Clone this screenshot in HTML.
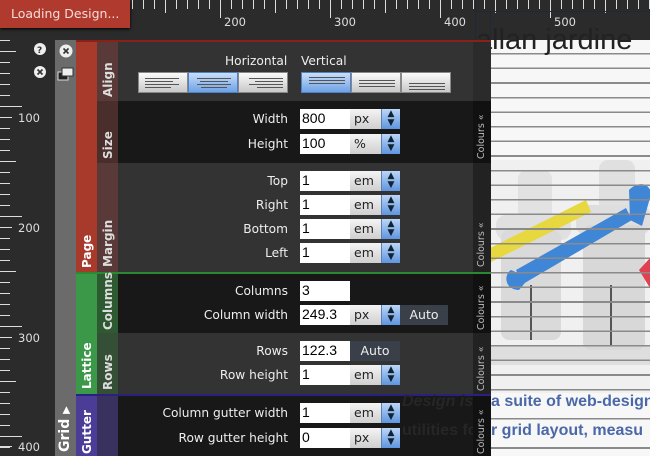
<!DOCTYPE html>
<html><head><meta charset="utf-8"><style>
*{margin:0;padding:0;box-sizing:border-box}
body{width:650px;height:456px;overflow:hidden;background:#2b2b2b;position:relative;font-family:"DejaVu Sans","Liberation Sans",sans-serif;font-size:12.2px;color:#eee}
.abs{position:absolute}
.lbl{position:absolute;right:362px;text-align:right;white-space:nowrap;color:#eee;font-size:12.2px}
.inp{position:absolute;left:300px;width:50px;height:20px;background:#fff;color:#000;font-family:"Liberation Sans",sans-serif;font-size:14px;padding:1px 2px;line-height:17px}
.sel{position:absolute;left:350px;width:50px;height:20px;background:linear-gradient(#f4f4f4,#cfcfcf);color:#222;font-size:12.5px;padding-left:4px;line-height:20px}
.sel b{position:absolute;right:0;top:0;width:19px;height:20px;background:linear-gradient(#bcd6f8,#5f95df);border-left:1px solid #5a7fb5;font-weight:normal;color:#123;font-size:9px;text-align:center;line-height:9px;padding-top:1px}
.btn{position:absolute;height:20px;background:#3a4049;color:#eee;font-size:12.5px;text-align:center;line-height:20px}
.vt{position:absolute;transform:rotate(-90deg);transform-origin:left top;white-space:nowrap;font-weight:bold;font-size:12px}
.col{position:absolute;left:473px;width:18px;background:#111}
.col span{position:absolute;transform:rotate(-90deg);transform-origin:left top;font-size:9.5px;color:#bbb;white-space:nowrap;left:3px}
.ab{position:absolute;top:72px;width:50px;height:21px;background:linear-gradient(#fafafa,#c8c8c8);border:1px solid #888}
.ab.on{background:linear-gradient(#c9def9,#6ea2e6);border-color:#4f7fc4}
.ab i{position:absolute;height:1px;background:#555}
</style></head><body>

<!-- top ruler -->
<svg class="abs" style="left:0;top:0" width="650" height="40">
<g stroke="#ddd" stroke-width="1">
<path d="M121.5 0v9M132.5 0v9M143.5 0v9M154.5 0v9M165.5 0v13M176.5 0v9M187.5 0v9M198.5 0v9M209.5 0v9M220.5 0v18M231.5 0v9M242.5 0v9M253.5 0v9M264.5 0v9M275.5 0v13M286.5 0v9M297.5 0v9M308.5 0v9M319.5 0v9M330.5 0v18M341.5 0v9M352.5 0v9M363.5 0v9M374.5 0v9M385.5 0v13M396.5 0v9M407.5 0v9M418.5 0v9M429.5 0v9M440.5 0v18M451.5 0v9M462.5 0v9M473.5 0v9M484.5 0v9M495.5 0v13M506.5 0v9M517.5 0v9M528.5 0v9M539.5 0v9M550.5 0v18M561.5 0v9M572.5 0v9M583.5 0v9M594.5 0v9M605.5 0v13M616.5 0v9M627.5 0v9M638.5 0v9M649.5 0v9"/>
</g>
<path d="M475.5 0v40M475 11.5h175M490.5 11v29" stroke="#1c2a38" stroke-width="1"/>
<g fill="#ddd" font-family="DejaVu Sans,sans-serif" font-size="11.5">
<text x="224" y="26">200</text><text x="334" y="26">300</text><text x="444" y="26">400</text><text x="554" y="26">500</text>
</g>
</svg>

<!-- left ruler -->
<svg class="abs" style="left:0;top:0" width="55" height="456">
<g stroke="#ddd"><path d="M0 40.5h10M0 51.5h16M0 62.5h10M0 73.5h10M0 84.5h10M0 95.5h10M0 106.5h22M0 117.5h10M0 128.5h10M0 139.5h10M0 150.5h10M0 161.5h16M0 172.5h10M0 183.5h10M0 194.5h10M0 205.5h10M0 216.5h22M0 227.5h10M0 238.5h10M0 249.5h10M0 260.5h10M0 271.5h16M0 282.5h10M0 293.5h10M0 304.5h10M0 315.5h10M0 326.5h22M0 337.5h10M0 348.5h10M0 359.5h10M0 370.5h10M0 381.5h16M0 392.5h10M0 403.5h10M0 414.5h10M0 425.5h10M0 436.5h22M0 447.5h10"/>
<path d="M0 117.5h12M0 227.5h12M0 337.5h12M0 446.5h12"/></g>
<g fill="#ddd" font-family="DejaVu Sans,sans-serif" font-size="11.5"><text x="18" y="122">100</text><text x="18" y="232">200</text><text x="18" y="342">300</text><text x="18" y="451">400</text></g>
<circle cx="40" cy="49" r="6" fill="#eee"/><text x="37" y="53" font-size="9" font-weight="bold" fill="#333">?</text>
<circle cx="40" cy="72" r="6" fill="#eee"/><path d="M37.5 69.5l5 5M42.5 69.5l-5 5" stroke="#333" stroke-width="1.6"/>
</svg>

<!-- loading -->
<div class="abs" style="left:0;top:0;width:130px;height:28px;background:#b13a2e;color:#f4dcd8;font-size:12.5px;line-height:27px;padding-left:11px;box-shadow:0 1px 3px #000">Loading Design...</div>

<!-- page content right -->
<div class="abs" style="left:491px;top:40px;width:159px;height:416px;background:#f7f7f7;overflow:hidden">
<svg width="159" height="416" style="position:absolute;left:0;top:0">
<rect x="0" y="120" width="159" height="240" fill="#f0f0f0"/>
<rect x="0" y="305" width="159" height="20" fill="#dedede"/>
<rect x="27" y="130" width="34" height="50" rx="9" fill="#e2e2e2"/>
<rect x="5" y="175" width="75" height="25" rx="10" fill="#e0e0e0"/>
<rect x="10" y="190" width="60" height="110" rx="8" fill="#dadada"/>
<path d="M40 245v55" stroke="#555" stroke-width="2"/>
<rect x="108" y="120" width="36" height="52" rx="9" fill="#e0e0e0"/>
<rect x="85" y="165" width="74" height="30" rx="10" fill="#dedede"/>
<rect x="92" y="185" width="62" height="125" rx="8" fill="#d8d8d8"/>
<path d="M120 245v60" stroke="#555" stroke-width="2"/>
<path d="M-5 210L95 160l5 12L0 222z" fill="#e8d840"/>
<path d="M25 230L135 168l6 12L32 244z" fill="#3f86d6"/>
<path d="M20 230c-8 5-6 20 8 20l10-12z" fill="#3f86d6"/>
<path d="M138 150c12-12 25-4 21 8l-8 28-12-6z" fill="#3f86d6"/>
<path d="M148 230l11-12v30z" fill="#e04050"/>
</svg>
<div style="position:absolute;left:0;top:0;width:159px;height:416px;background:repeating-linear-gradient(to bottom,transparent 0,transparent 13px,#8a8a8a 13px,#8a8a8a 14.6px)"></div>
</div>
<div class="abs" style="left:476px;top:24px;font-family:'Liberation Sans',sans-serif;font-size:29px;color:#222;white-space:nowrap">allan jardine</div>

<!-- gray Grid strip -->
<div class="abs" style="left:55px;top:40px;width:21px;height:416px;background:#6b6b6b"></div>
<svg class="abs" style="left:55px;top:42px" width="21" height="40"><circle cx="11" cy="9" r="6.5" fill="#eee"/><path d="M8.5 6.5l5 5M13.5 6.5l-5 5" stroke="#333" stroke-width="1.6"/>
<rect x="3" y="30" width="10" height="8" fill="#222" stroke="#ddd"/><rect x="7" y="26" width="11" height="8" fill="#eee" stroke="#333"/></svg>
<div class="vt" style="left:57px;top:452px;color:#fff;font-size:14px">Grid <span style="font-size:10px">▶</span></div>

<!-- main strips -->
<div class="abs" style="left:76px;top:40px;width:415px;height:2px;background:#8a2018"></div>
<div class="abs" style="left:76px;top:42px;width:21px;height:230px;background:#a83a2c"></div>
<div class="abs" style="left:76px;top:272px;width:415px;height:2px;background:#2a8a34"></div>
<div class="abs" style="left:76px;top:274px;width:21px;height:120px;background:#3a9848"></div>
<div class="abs" style="left:76px;top:394px;width:415px;height:2px;background:#2a2080"></div>
<div class="abs" style="left:76px;top:396px;width:21px;height:60px;background:#4b3c98"></div>
<div class="vt" style="left:80px;top:268px;color:#fff">Page</div>
<div class="vt" style="left:80px;top:389px;color:#fff">Lattice</div>
<div class="vt" style="left:80px;top:454px;color:#fff">Gutter</div>

<!-- sub strips -->
<div class="abs" style="left:97px;top:42px;width:21px;height:59px;background:#5a3a38"></div>
<div class="abs" style="left:97px;top:101px;width:21px;height:62px;background:#4a2e2c"></div>
<div class="abs" style="left:97px;top:163px;width:21px;height:109px;background:#5a3a38"></div>
<div class="abs" style="left:97px;top:274px;width:21px;height:59px;background:#2e5a32"></div>
<div class="abs" style="left:97px;top:333px;width:21px;height:61px;background:#354e36"></div>
<div class="abs" style="left:97px;top:396px;width:21px;height:60px;background:#39325e"></div>
<div class="vt" style="left:101px;top:97px;color:#ddd">Align</div>
<div class="vt" style="left:101px;top:159px;color:#ddd">Size</div>
<div class="vt" style="left:101px;top:267px;color:#ddd">Margin</div>
<div class="vt" style="left:101px;top:330px;color:#ddd">Columns</div>
<div class="vt" style="left:101px;top:390px;color:#ddd">Rows</div>

<!-- content bgs -->
<div class="abs" style="left:118px;top:42px;width:355px;height:59px;background:#333"></div>
<div class="abs" style="left:118px;top:101px;width:355px;height:62px;background:#181818"></div>
<div class="abs" style="left:118px;top:163px;width:355px;height:109px;background:#333"></div>
<div class="abs" style="left:118px;top:274px;width:355px;height:59px;background:#181818"></div>
<div class="abs" style="left:118px;top:333px;width:355px;height:61px;background:#333"></div>
<div class="abs" style="left:118px;top:396px;width:355px;height:60px;background:#181818"></div>

<!-- see-through text -->
<div class="abs" style="left:402px;top:393px;font-family:'Liberation Sans',sans-serif;font-weight:bold;font-size:16px;color:#262626;white-space:nowrap;font-style:italic">Design is a</div>
<div class="abs" style="left:402px;top:422px;font-family:'Liberation Sans',sans-serif;font-weight:bold;font-size:16px;color:#262626;white-space:nowrap">utilities fo</div>
<div class="abs" style="left:491px;top:393px;width:159px;overflow:hidden;font-family:'Liberation Sans',sans-serif;font-weight:bold;font-size:16px;color:#4a68a8;white-space:nowrap;background:#f7f7f7">a suite of web-design</div>
<div class="abs" style="left:491px;top:422px;width:159px;overflow:hidden;font-family:'Liberation Sans',sans-serif;font-weight:bold;font-size:16px;color:#4a68a8;white-space:nowrap;background:#f7f7f7">r grid layout, measu</div>

<!-- colours strips -->
<div class="col" style="top:42px;height:59px;background:#2b2b2b"></div>
<div class="col" style="top:101px;height:62px"><span style="top:58px">Colours «</span></div>
<div class="col" style="top:163px;height:109px;background:#222"><span style="top:104px">Colours «</span></div>
<div class="col" style="top:274px;height:59px"><span style="top:56px">Colours «</span></div>
<div class="col" style="top:333px;height:61px;background:#222"><span style="top:58px">Colours «</span></div>
<div class="col" style="top:396px;height:60px"><span style="top:58px">Colours «</span></div>

<!-- align -->
<div class="abs" style="left:225px;top:54px;color:#eee">Horizontal</div>
<div class="abs" style="left:301px;top:54px;color:#eee">Vertical</div>
<div class="ab" style="left:138px"><i style="left:6px;top:5px;width:34px"></i><i style="left:6px;top:8px;width:28px"></i><i style="left:6px;top:11px;width:34px"></i><i style="left:6px;top:14px;width:26px"></i></div>
<div class="ab on" style="left:188px"><i style="left:8px;top:5px;width:34px"></i><i style="left:11px;top:8px;width:28px"></i><i style="left:8px;top:11px;width:34px"></i><i style="left:12px;top:14px;width:26px"></i></div>
<div class="ab" style="left:238px"><i style="left:10px;top:5px;width:34px"></i><i style="left:16px;top:8px;width:28px"></i><i style="left:10px;top:11px;width:34px"></i><i style="left:18px;top:14px;width:26px"></i></div>
<div class="ab on" style="left:301px"><i style="left:7px;top:4px;width:36px"></i><i style="left:7px;top:7px;width:36px"></i><i style="left:7px;top:10px;width:36px"></i></div>
<div class="ab" style="left:351px"><i style="left:7px;top:7px;width:36px"></i><i style="left:7px;top:10px;width:36px"></i><i style="left:7px;top:13px;width:36px"></i></div>
<div class="ab" style="left:401px"><i style="left:7px;top:10px;width:36px"></i><i style="left:7px;top:13px;width:36px"></i><i style="left:7px;top:16px;width:36px"></i></div>

<!-- fields -->
<div class="lbl" style="top:112px">Width</div><div class="inp" style="top:109px">800</div><div class="sel" style="top:109px">px<b>▲<br>▼</b></div>
<div class="lbl" style="top:137px">Height</div><div class="inp" style="top:134px">100</div><div class="sel" style="top:134px">%<b>▲<br>▼</b></div>

<div class="lbl" style="top:174px">Top</div><div class="inp" style="top:171px">1</div><div class="sel" style="top:171px">em<b>▲<br>▼</b></div>
<div class="lbl" style="top:198px">Right</div><div class="inp" style="top:195px">1</div><div class="sel" style="top:195px">em<b>▲<br>▼</b></div>
<div class="lbl" style="top:222px">Bottom</div><div class="inp" style="top:219px">1</div><div class="sel" style="top:219px">em<b>▲<br>▼</b></div>
<div class="lbl" style="top:246px">Left</div><div class="inp" style="top:243px">1</div><div class="sel" style="top:243px">em<b>▲<br>▼</b></div>

<div class="lbl" style="top:284px">Columns</div><div class="inp" style="top:281px">3</div>
<div class="lbl" style="top:308px">Column width</div><div class="inp" style="top:305px">249.3</div><div class="sel" style="top:305px">px<b>▲<br>▼</b></div><div class="btn" style="left:400px;top:305px;width:48px">Auto</div>

<div class="lbl" style="top:344px">Rows</div><div class="inp" style="top:341px">122.3</div><div class="btn" style="left:350px;top:341px;width:50px">Auto</div>
<div class="lbl" style="top:368px">Row height</div><div class="inp" style="top:365px">1</div><div class="sel" style="top:365px">em<b>▲<br>▼</b></div>

<div class="lbl" style="top:406px">Column gutter width</div><div class="inp" style="top:403px">1</div><div class="sel" style="top:403px">em<b>▲<br>▼</b></div>
<div class="lbl" style="top:431px">Row gutter height</div><div class="inp" style="top:428px">0</div><div class="sel" style="top:428px">px<b>▲<br>▼</b></div>

</body></html>
